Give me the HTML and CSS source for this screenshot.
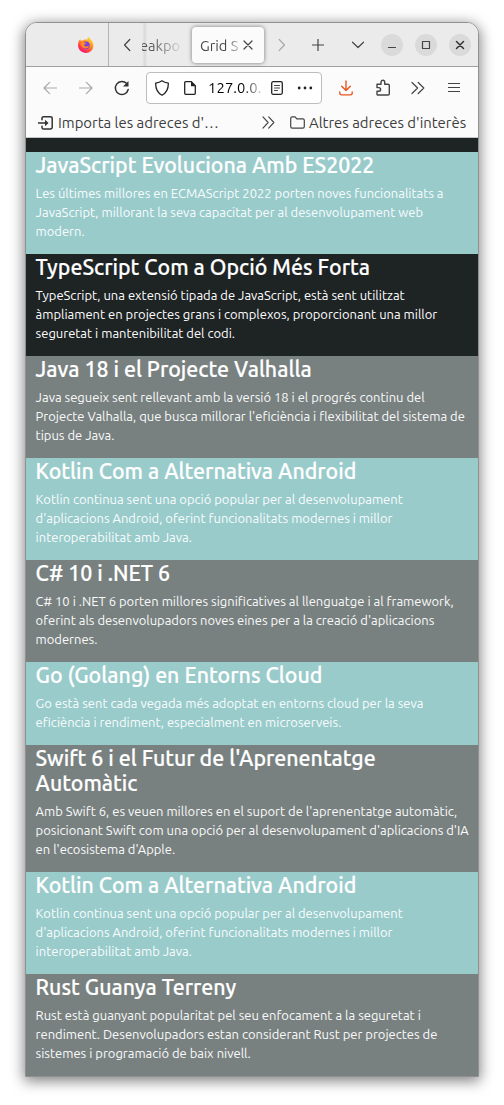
FILE: index.html
```html
<!DOCTYPE html>
<html lang="ca">
<head>
<meta charset="utf-8">
<title>Grid System</title>
<link rel="stylesheet" href="styles.css">
</head>
<body>
<div class="window">
  <header class="tabs">
    <div class="pinned">
      <svg width="16" height="16" viewBox="0 0 16 16">
        <defs>
          <linearGradient id="flame" x1=".85" y1="0" x2=".2" y2="1"><stop offset="0" stop-color="#ffe837"/><stop offset=".4" stop-color="#ff9126"/><stop offset=".75" stop-color="#ff3650"/><stop offset="1" stop-color="#e31587"/></linearGradient>
        </defs>
        <path d="M10.500 0c1 1 1.700 1.700 2.200 2.700.7.2 1.300 1 1.600 1.800C17.500 11 13 16 8 16 3.500 16 0 12.500 0 8.300 0 6 .7 4 2.200 2.300l.5 1.600c.8-.5 1.500-.6 2.300-.3.6-.8 1.500-1.200 2.600-1.400L9 3c.3-1.200.8-2.200 1.500-3z" fill="url(#flame)"/>
        <circle cx="8" cy="8.300" r="3.700" fill="#7542e5"/>
        <path d="M2.700 4.500c1.500-.5 3 0 3.600 1.100l2 .3c-.3.9-1.500 1-2 1.800-.2 1 .5 2 2 1.700 1-.2 1.700-.7 2.700-.2-1 2.500-5 3.200-7 .5C2.700 8 2.500 6 2.700 4.500z" fill="#ff8a22"/>
      </svg>
    </div>
    <div class="strip">
      <svg class="scroll-left" width="8" height="14" viewBox="0 0 8 14"><path d="M6.800 1.500 1.500 7l5.300 5.500" class="line"/></svg>
      <div class="tab-old"><span>eakpo</span></div>
      <div class="tab-active"><span class="tab-title">Grid S</span>
        <svg width="10" height="10" viewBox="0 0 10 10"><path d="m1 1 8 8M9 1 1 9" class="line"/></svg></div>
      <svg class="scroll-right" width="8" height="14" viewBox="0 0 8 14"><path d="M1.200 1.500 6.500 7l-5.300 5.500" class="line pale"/></svg>
      <svg class="plus" width="12" height="12" viewBox="0 0 12 12"><path d="M6 0v12M0 6h12" class="line"/></svg>
      <svg class="list" width="14" height="8" viewBox="0 0 14 8"><path d="m1.500 1.200 5.500 5.300 5.500-5.300" class="line"/></svg>
      <div class="controls">
        <span><svg width="22" height="22" viewBox="0 0 22 22"><path d="M7.500 13.500h7" class="line"/></svg></span>
        <span><svg width="22" height="22" viewBox="0 0 22 22"><path d="M7.500 7.500h7v7h-7z" class="line"/></svg></span>
        <span><svg width="22" height="22" viewBox="0 0 22 22"><path d="m7.500 7.500 7 7m0-7-7 7" class="line strong"/></svg></span>
      </div>
    </div>
  </header>
  <nav class="toolbar">
    <svg class="back" width="14" height="14" viewBox="0 0 14 14"><path d="M14 7H1.200M6.600 1.400 1 7l5.600 5.600" class="line pale"/></svg>
    <svg class="forward" width="14" height="14" viewBox="0 0 14 14"><path d="M0 7h12.800M7.400 1.400 13 7l-5.600 5.600" class="line pale"/></svg>
    <svg class="reload" width="16" height="16" viewBox="0 0 16 16"><path d="M12.700 3.600A6.500 6.500 0 1 0 14.200 9.500" class="line strong"/><path d="M14.500 1v5.500H9z" fill="#333"/></svg>
    <div class="url">
      <svg width="16" height="16" viewBox="0 0 16 16"><path d="M8 .8c2 1.500 4 2 6.300 2.300.2 5-1.300 9.300-6.300 12.100C3 12.400 1.500 8.100 1.700 3.100 4 2.800 6 2.300 8 .8z" class="line ink"/></svg>
      <svg class="page" width="14" height="16" viewBox="0 0 14 16"><path d="M2.700 1.700h5.600l4 4v7.600a1 1 0 0 1-1 1H2.700a1 1 0 0 1-1-1V2.700a1 1 0 0 1 1-1z" class="line ink"/><path d="M8 1.200 13 6.300H8z" fill="#222"/></svg>
      <span class="address">127.0.0.</span>
      <svg class="reader" width="12" height="14" viewBox="0 0 12 14"><rect x=".7" y=".7" width="10.600" height="12.600" rx="1.500" class="line ink"/><path d="M3.500 4.500h5M3.500 7h5M3.500 9.500h3" class="line"/></svg>
      <svg class="more" width="16" height="4" viewBox="0 0 16 4" fill="#222"><circle cx="2.200" cy="2" r="1.400"/><circle cx="8" cy="2" r="1.400"/><circle cx="13.800" cy="2" r="1.400"/></svg>
    </div>
    <svg class="download" width="14" height="16" viewBox="0 0 14 16"><path d="M7 1v9.500M2.700 6.300 7 10.600l4.300-4.300M.8 12v1.200c0 1 .7 1.700 1.700 1.700h9c1 0 1.700-.7 1.700-1.700V12" class="line orange"/></svg>
    <svg class="puzzle" width="16" height="17" viewBox="0 0 16 17"><path d="M2 7.500V5.200h4V3.300C6 .5 9.700.5 9.700 3.300v1.900H13c.9 0 1.300.4 1.300 1.300v8.200c0 .8-.5 1.300-1.300 1.300H3c-.7 0-1-.4-1-1v-2.800h1.800c2.400 0 2.400-3.600 0-3.600H2z" class="line puzzle-line"/></svg>
    <svg class="chev" width="14" height="14" viewBox="0 0 14 14"><path d="m1 1.500 5.600 5.500L1 12.500M7.200 1.500l5.600 5.500-5.600 5.500" class="line"/></svg>
    <svg class="menu" width="12" height="12" viewBox="0 0 12 12"><path d="M.5 1.500h11M.5 5.500h11M.5 9.500h11" class="line"/></svg>
  </nav>
  <nav class="bookmarks">
    <svg width="15" height="14" viewBox="0 0 15 14"><path d="M4 3.800V2.500c0-1 .5-1.700 1.600-1.700h6.800c1.200 0 1.800.6 1.800 1.700v8.800c0 1.100-.6 1.700-1.800 1.700H5.600C4.500 13 4 12.400 4 11.400v-1.200M0 7h8" class="line strong"/><path d="M7 3.800 10.500 7 7 10.200z" fill="#333"/></svg>
    <span class="import">Importa les adreces d'…</span>
    <svg class="overflow" width="13" height="13" viewBox="0 0 14 14"><path d="m1 1 5.600 6L1 13M7.200 1l5.600 6-5.600 6" class="line"/></svg>
    <svg class="folder" width="15" height="13" viewBox="0 0 15 13"><path d="M.7 2.400C.7 1.300 1.200.8 2.300.8h2.800l1.700 2h6c1 0 1.500.5 1.500 1.500v6.300c0 1-.5 1.600-1.500 1.600H2.300c-1 0-1.600-.6-1.600-1.600z" class="line"/></svg>
    <span class="other">Altres adreces d'interès</span>
  </nav>
  <main class="page-view">
    <article class="card teal"><h2>JavaScript Evoluciona Amb ES2022</h2><p>Les últimes millores en ECMAScript 2022 porten noves funcionalitats a<br>JavaScript, millorant la seva capacitat per al desenvolupament web<br>modern.</p></article>
    <article class="card dark"><h2>TypeScript Com a Opció Més Forta</h2><p>TypeScript, una extensió tipada de JavaScript, està sent utilitzat<br>àmpliament en projectes grans i complexos, proporcionant una millor<br>seguretat i mantenibilitat del codi.</p></article>
    <article class="card gray"><h2>Java 18 i el Projecte Valhalla</h2><p>Java segueix sent rellevant amb la versió 18 i el progrés continu del<br>Projecte Valhalla, que busca millorar l'eficiència i flexibilitat del sistema de<br>tipus de Java.</p></article>
    <article class="card teal"><h2>Kotlin Com a Alternativa Android</h2><p>Kotlin continua sent una opció popular per al desenvolupament<br>d'aplicacions Android, oferint funcionalitats modernes i millor<br>interoperabilitat amb Java.</p></article>
    <article class="card gray"><h2>C# 10 i .NET 6</h2><p>C# 10 i .NET 6 porten millores significatives al llenguatge i al framework,<br>oferint als desenvolupadors noves eines per a la creació d'aplicacions<br>modernes.</p></article>
    <article class="card teal"><h2>Go (Golang) en Entorns Cloud</h2><p>Go està sent cada vegada més adoptat en entorns cloud per la seva<br>eficiència i rendiment, especialment en microserveis.</p></article>
    <article class="card gray"><h2>Swift 6 i el Futur de l'Aprenentatge<br>Automàtic</h2><p>Amb Swift 6, es veuen millores en el suport de l'aprenentatge automàtic,<br>posicionant Swift com una opció per al desenvolupament d'aplicacions d'IA<br>en l'ecosistema d'Apple.</p></article>
    <article class="card teal"><h2>Kotlin Com a Alternativa Android</h2><p>Kotlin continua sent una opció popular per al desenvolupament<br>d'aplicacions Android, oferint funcionalitats modernes i millor<br>interoperabilitat amb Java.</p></article>
    <article class="card gray"><h2>Rust Guanya Terreny</h2><p>Rust està guanyant popularitat pel seu enfocament a la seguretat i<br>rendiment. Desenvolupadors estan considerant Rust per projectes de<br>sistemes i programació de baix nivell.</p></article>
  </main>
</div>
</body>
</html>
```
FILE: styles.css
```css
* { box-sizing: border-box; }
body { margin: 0; height: 1105px; padding: 22px 25px 0; background: #fff; font-family: Ubuntu, "Noto Sans", sans-serif; overflow: hidden; }
svg { display: block; flex: none; }
.line { fill: none; stroke: #444; stroke-width: 1.2; stroke-linecap: round; stroke-linejoin: round; }
.strong { stroke: #333; stroke-width: 1.5; }
.ink { stroke: #222; stroke-width: 1.3; }
.pale { stroke: #a9a9a9; }
.orange { stroke: #e95420; stroke-width: 1.4; }
.puzzle-line { stroke-width: 1.4; }

.window { width: 454px; height: 1055px; border: 1px solid #919191; border-radius: 12px 12px 0 0; overflow: hidden; background: #fbfbfb; box-shadow: 0 3px 14px 1px rgba(0,0,0,.5); }

.tabs { display: flex; height: 44px; background: #ebebeb; border-bottom: 1px solid #a0a0a0; }
.pinned { width: 83px; padding: 14px 0 0 52px; border-right: 1px solid #b3b3b3; }
.strip { flex: 1; display: flex; align-items: center; }
.scroll-left { margin-left: 14px; }
.tab-old { width: 41px; height: 43px; margin-left: 11px; overflow: hidden; font-size: 14.667px; line-height: 45px; background: linear-gradient(90deg, transparent 0, #d9d9d9 3px, transparent 5px); }
.tab-old span { display: block; margin-left: -2px; color: transparent; background: linear-gradient(90deg, #555 14px, #ebebeb 44px); background-clip: text; -webkit-background-clip: text; }
.tab-active { display: flex; align-items: center; width: 72px; height: 36px; margin-left: 9px; padding-left: 8px; border-radius: 4px; background: #fbfbfb; box-shadow: 0 0 4px rgba(0,0,0,.5); }
.tab-title { width: 42px; margin: 1px 1px 0 0; white-space: nowrap; font-size: 14.667px; color: transparent; background: linear-gradient(90deg, #444 26px, #fbfbfb 44px); background-clip: text; -webkit-background-clip: text; }
.scroll-right { margin-left: 14px; }
.plus { margin-left: 26px; }
.list { margin-left: 27px; }
.controls { display: flex; gap: 12px; margin-left: 16px; }
.controls span { width: 22px; height: 22px; border-radius: 50%; background: #dadada; }

.toolbar { display: flex; align-items: center; height: 41px; }
.back { margin-left: 17px; }
.forward { margin-left: 22px; }
.reload { margin-left: 21px; }
.url { display: flex; align-items: center; width: 176px; height: 32px; margin-left: 16px; padding-left: 7px; border: 1px solid #bdbdbd; border-radius: 4px; background: #fff; }
.page { margin-left: 13px; }
.address { width: 54px; margin: 0 0 0 11px; font-size: 14.8px; letter-spacing: .1px; color: transparent; background: linear-gradient(90deg, #000 34px, #fff 58px); background-clip: text; -webkit-background-clip: text; }
.reader { margin-left: 9px; }
.more { margin-left: 14px; }
.download { margin-left: 17px; }
.puzzle { margin-left: 22px; }
.chev { margin-left: 20px; }
.menu { margin-left: 23px; }

.bookmarks { display: flex; align-items: center; height: 30px; padding-left: 12px; border-bottom: 1px solid #c4c4c4; color: #3d3d3d; font-size: 14.9px; white-space: nowrap; }
.import { width: 161px; margin-left: 5px; }
.overflow { margin-left: 43px; }
.folder { margin-left: 15px; }
.other { margin-left: 4px; }

.page-view { padding-top: 14px; background: #1e2324; }
.card { padding: .9px 0 12.8px 9.6px; color: #fff; white-space: nowrap; }
.card h2 { margin: 0 0 5.1px; font-size: 21.33px; font-weight: 500; line-height: 25.6px; -webkit-text-stroke: .2px #fff; }
.card p { margin: 0; font-size: 12.97px; line-height: 19.2px; }
.teal { background: #99cbcb; }
.teal p { color: #f8fcfc; }
.dark { background: #1e2324; }
.gray { background: #788180; }
.gray p { color: #fafafa; }
```
